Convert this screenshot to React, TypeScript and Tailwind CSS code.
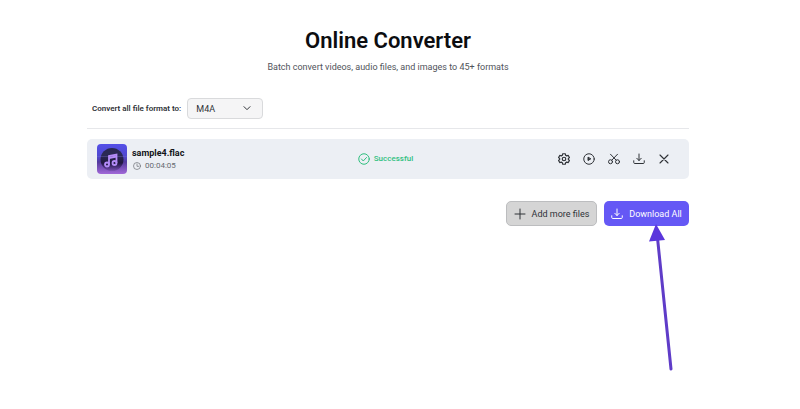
import type { ReactNode } from "react";

const formats = ["M4A", "MP3", "WAV", "FLAC", "OGG"];

function Icon({ className, children }: { className: string; children: ReactNode }) {
  return (
    <svg
      viewBox="0 0 24 24"
      fill="none"
      stroke="currentColor"
      strokeLinecap="round"
      strokeLinejoin="round"
      strokeWidth="2"
      className={className}
      aria-hidden="true"
    >
      {children}
    </svg>
  );
}

const actions = [
  {
    label: "Settings",
    icon: (
      <>
        <path
          d="M9.500 1.500h5l.8 3 2.200 1.200 3-.8 2.300 4.200-2.200 2.100v1.600l2.200 2.100-2.300 4.200-3-.8-2.200 1.200-.8 3h-5l-.8-3-2.200-1.200-3 .8-2.300-4.200 2.200-2.100v-1.600L1.200 9.100l2.300-4.200 3 .8 2.200-1.200z"
          strokeWidth="2.400"
        />
        <circle cx="12" cy="12" r="3.500" strokeWidth="2.400" />
      </>
    ),
  },
  {
    label: "Play",
    icon: (
      <>
        <circle cx="12" cy="12" r="10.500" />
        <path d="M10 9v6l5-3z" fill="currentColor" />
      </>
    ),
  },
  {
    label: "Cut",
    icon: (
      <>
        <circle cx="5" cy="17.500" r="4" />
        <circle cx="19" cy="17.500" r="4" />
        <path d="M5 2.500 16.500 14.500M19 2.500 7.500 14.500" />
      </>
    ),
  },
  {
    label: "Download",
    icon: <path d="M12 2v13M7.500 10.500 12 15l4.500-4.500M1.500 15.500V19a2 2 0 0 0 2 2h17a2 2 0 0 0 2-2v-3.500" />,
  },
  {
    label: "Remove",
    icon: <path d="m4 4 16 16M20 4 4 20" strokeWidth="2.200" />,
  },
];

function Cover() {
  return (
    <svg viewBox="0 0 30 30" className="size-[30px] shrink-0 rounded" aria-hidden="true">
      <defs>
        <linearGradient id="cover" x1="0" y1="0" x2="0" y2="1">
          <stop offset="0" stopColor="#5550e8" />
          <stop offset="0.42" stopColor="#5048ce" />
          <stop offset="0.6" stopColor="#533a9c" />
          <stop offset="1" stopColor="#a168d8" />
        </linearGradient>
        <linearGradient id="disc" x1="0" y1="0" x2="0" y2="1">
          <stop offset="0" stopColor="#2a2852" />
          <stop offset="0.3" stopColor="#2b2a55" />
          <stop offset="0.65" stopColor="#211840" />
          <stop offset="1" stopColor="#3a2468" stopOpacity="0.2" />
        </linearGradient>
      </defs>
      <rect width="30" height="30" fill="url(#cover)" />
      <circle cx="15" cy="15.500" r="11.500" fill="url(#disc)" />
      <path d="M0 12.500h30" stroke="#7770ca" strokeWidth="0.6" opacity="0.6" />
      <g fill="none" stroke="#b48cf8" strokeWidth="1.800">
        <path d="M12 20.500v-8.500l7.500-1.500v8.500" />
        <path d="M12 14l7.500-1.500" />
        <circle cx="10" cy="20.500" r="2" />
        <circle cx="17.500" cy="19" r="2" />
      </g>
    </svg>
  );
}

export default function App() {
  return (
    <div className="min-h-screen bg-white pr-6 font-[Roboto,sans-serif] text-[#2f3237]">
      <main className="mx-auto max-w-[602px] pt-[29px] text-[9px] leading-3">
        <h1 className="text-center text-[22px] leading-6 font-semibold text-[#0c0d10]">Online Converter</h1>
        <p className="mt-2 text-center text-[#50535a]">
          Batch convert videos, audio files, and images to 45+ formats
        </p>

        <div className="mt-[25px] flex items-center gap-[6px] border-b border-[#e6e7ea] pb-[9px] pl-[5px]">
          <label htmlFor="format" className="text-[8px] font-semibold">
            Convert all file format to:
          </label>
          <div className="relative">
            <select
              id="format"
              defaultValue="M4A"
              className="block h-[21px] w-[76px] appearance-none rounded border border-[#d9dadc] bg-[#f5f5f6] pl-2 text-[9px]"
            >
              {formats.map((format) => (
                <option key={format}>{format}</option>
              ))}
            </select>
            <Icon className="pointer-events-none absolute top-1.5 right-3 size-2">
              <path d="m3 8 9 9 9-9" strokeWidth="3" />
            </Icon>
          </div>
        </div>

        <div className="mt-[10px] grid h-10 grid-cols-3 items-center rounded-[5px] bg-[#eceff4] pr-[18px] pl-[10px]">
          <div className="flex items-center gap-[5px]">
            <Cover />
            <div>
              <div className="font-bold text-[#121418]">sample4.flac</div>
              <div className="mt-px flex items-center gap-1 pl-px text-[8px] text-[#666a71]">
                <Icon className="size-2">
                  <circle cx="12" cy="12" r="10.500" />
                  <path d="M12 6v7h5" />
                </Icon>
                00:04:05
              </div>
            </div>
          </div>

          <div className="flex items-center justify-center gap-1 pl-[3px] text-[8px] font-medium text-[#2fbf7f]">
            <Icon className="size-3">
              <circle cx="12" cy="12" r="10.500" />
              <path d="m7 12 3.500 4L17 9" />
            </Icon>
            Successful
          </div>

          <div className="flex items-center justify-end gap-[11px]">
            {actions.map((action) => (
              <button key={action.label} type="button" aria-label={action.label} className="p-px">
                <Icon className="size-3">{action.icon}</Icon>
              </button>
            ))}
          </div>
        </div>

        <div className="mt-[22px] flex justify-end gap-[7px]">
          <button
            type="button"
            className="flex h-[25px] w-[91px] items-center justify-center gap-1.5 rounded-[5px] border border-[#bcbdbf] bg-[#d5d5d5]"
          >
            <Icon className="size-3">
              <path d="M12 2v20M2 12h20" />
            </Icon>
            Add more files
          </button>
          <div className="relative">
            <button
              type="button"
              className="flex h-[25px] w-[85px] items-center justify-center gap-1.5 rounded-[5px] bg-[#6558f5] text-white"
            >
              <Icon className="size-3">
                <path d="M12 2v13M7.500 10.500 12 15l4.500-4.500M1.500 15.500V19a2 2 0 0 0 2 2h17a2 2 0 0 0 2-2v-3.500" />
              </Icon>
              Download All
            </button>
            <svg
              viewBox="0 0 24 148"
              className="pointer-events-none absolute top-full right-4 -mt-0.5 h-[148px] w-6"
              aria-hidden="true"
            >
              <path d="M8.500 14 22 145" stroke="#5f3cc8" strokeWidth="3" strokeLinecap="round" />
              <path d="M7 0 0 17.500 16 16z" fill="#5b36dc" />
            </svg>
          </div>
        </div>
      </main>
    </div>
  );
}
